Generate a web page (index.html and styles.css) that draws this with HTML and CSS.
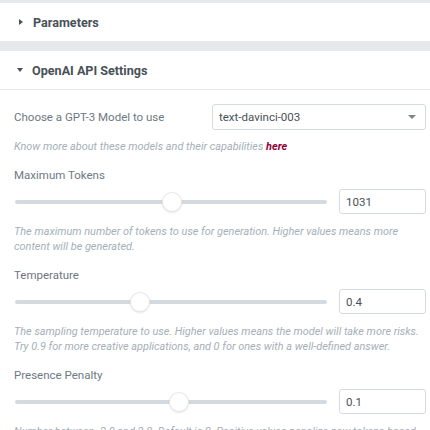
FILE: index.html
```html
<!DOCTYPE html>
<html>
<head>
<meta charset="utf-8">
<link rel="stylesheet" href="styles.css">
</head>
<body>
<div class="panel">
  <div class="strip"></div>
  <div class="section-head">
    <span class="caret caret-right"></span>
    <span class="section-title">Parameters</span>
  </div>
  <div class="gap"></div>
  <div class="section-head open">
    <span class="caret caret-down"></span>
    <span class="section-title">OpenAI API Settings</span>
  </div>
  <div class="content">
    <div class="control">
      <div class="select-row">
        <label class="label">Choose a GPT-3 Model to use</label>
        <div class="select">
          <span class="select-value">text-davinci-003</span>
          <span class="select-caret"></span>
        </div>
      </div>
      <p class="help help-first">Know more about these models and their capabilities <a class="link">here</a></p>
    </div>

    <div class="control">
      <div class="label">Maximum Tokens</div>
      <div class="slider-row">
        <div class="slider">
          <div class="track"></div>
          <div class="thumb" style="left: 50.34%"></div>
        </div>
        <div class="num">1031</div>
      </div>
      <p class="help">The maximum number of tokens to use for generation. Higher values means more content will be generated.</p>
    </div>

    <div class="control">
      <div class="label">Temperature</div>
      <div class="slider-row">
        <div class="slider">
          <div class="track"></div>
          <div class="thumb" style="left: 40%"></div>
        </div>
        <div class="num">0.4</div>
      </div>
      <p class="help">The sampling temperature to use. Higher values means the model will take more risks. Try 0.9 for more creative applications, and 0 for ones with a well-defined answer.</p>
    </div>

    <div class="control">
      <div class="label">Presence Penalty</div>
      <div class="slider-row">
        <div class="slider">
          <div class="track"></div>
          <div class="thumb" style="left: 52.5%"></div>
        </div>
        <div class="num">0.1</div>
      </div>
      <p class="help">Number between -2.0 and 2.0. Default is 0. Positive values penalize new tokens based on whether they appear in the text so far.</p>
    </div>
  </div>
</div>
</body>
</html>
```

FILE: styles.css
```css
html, body {
  margin: 0;
  padding: 0;
  background: #ffffff;
}
body {
  font-family: Roboto, "Liberation Sans", Arial, sans-serif;
  width: 430px;
  height: 430px;
  overflow: hidden;
}
.panel {
  display: flex;
  flex-direction: column;
}
.strip {
  height: 3px;
  background: #e6e9ec;
}
.gap {
  height: 10px;
  background: #e6e9ec;
}
.section-head {
  height: 38px;
  display: flex;
  align-items: center;
  padding-left: 17px;
  background: #ffffff;
}
.section-head.open {
  border-bottom: 1px solid #e6e9ec;
}
.caret {
  width: 0;
  height: 0;
}
.caret-right {
  border-top: 3.5px solid transparent;
  border-bottom: 3.5px solid transparent;
  border-left: 4px solid #495157;
  margin-left: 2px;
  margin-right: 10px;
}
.caret-down {
  border-left: 3.5px solid transparent;
  border-right: 3.5px solid transparent;
  border-top: 4px solid #495157;
  margin-right: 9px;
}
.section-title {
  font-size: 12.6px;
  font-weight: 700;
  color: #495157;
}
.content {
  padding: 13px 4px 0 14px;
  display: flex;
  flex-direction: column;
  gap: 13px;
}
.control {
  display: flex;
  flex-direction: column;
}
.select-row {
  display: flex;
  align-items: center;
  height: 27px;
}
.label {
  font-size: 11.5px;
  line-height: 16px;
  color: #6d7882;
  flex: 1;
}
.select {
  width: 214px;
  height: 26px;
  border: 1px solid #d5dadf;
  border-radius: 3px;
  display: flex;
  align-items: center;
  justify-content: space-between;
  padding: 0 9px 0 6px;
  box-sizing: border-box;
}
.select-value {
  font-size: 11.5px;
  color: #495157;
}
.select-caret {
  width: 0;
  height: 0;
  border-left: 4px solid transparent;
  border-right: 4px solid transparent;
  border-top: 4.5px solid #7a848d;
}
.help {
  margin: 9px 0 0;
  font-size: 10.9px;
  line-height: 15px;
  font-style: italic;
  color: #a4afb7;
}
.help-first {
  margin-top: 9px;
  margin-bottom: 0;
}
.link {
  color: #93003c;
  font-weight: 700;
}
.slider-row {
  display: flex;
  align-items: center;
  gap: 12px;
  margin-top: 6px;
  height: 25px;
}
.slider-row + .help {
  margin-top: 10px;
}
.slider {
  position: relative;
  flex: 1;
  height: 18px;
  display: flex;
  align-items: center;
  margin-left: 1px;
}
.track {
  flex: 1;
  height: 4px;
  border-radius: 2px;
  background: #d5dadf;
}
.thumb {
  position: absolute;
  top: 0;
  width: 18px;
  height: 18px;
  margin-left: -9px;
  border-radius: 50%;
  background: #ffffff;
  box-shadow: 0 0 0 1px #e6e9ec, 0 1px 3px rgba(0, 0, 0, 0.22);
}
.num {
  width: 87px;
  height: 25px;
  box-sizing: border-box;
  border: 1px solid #d5dadf;
  border-radius: 3px;
  padding-left: 6px;
  font-size: 11.5px;
  color: #495157;
  display: flex;
  align-items: center;
}
```
